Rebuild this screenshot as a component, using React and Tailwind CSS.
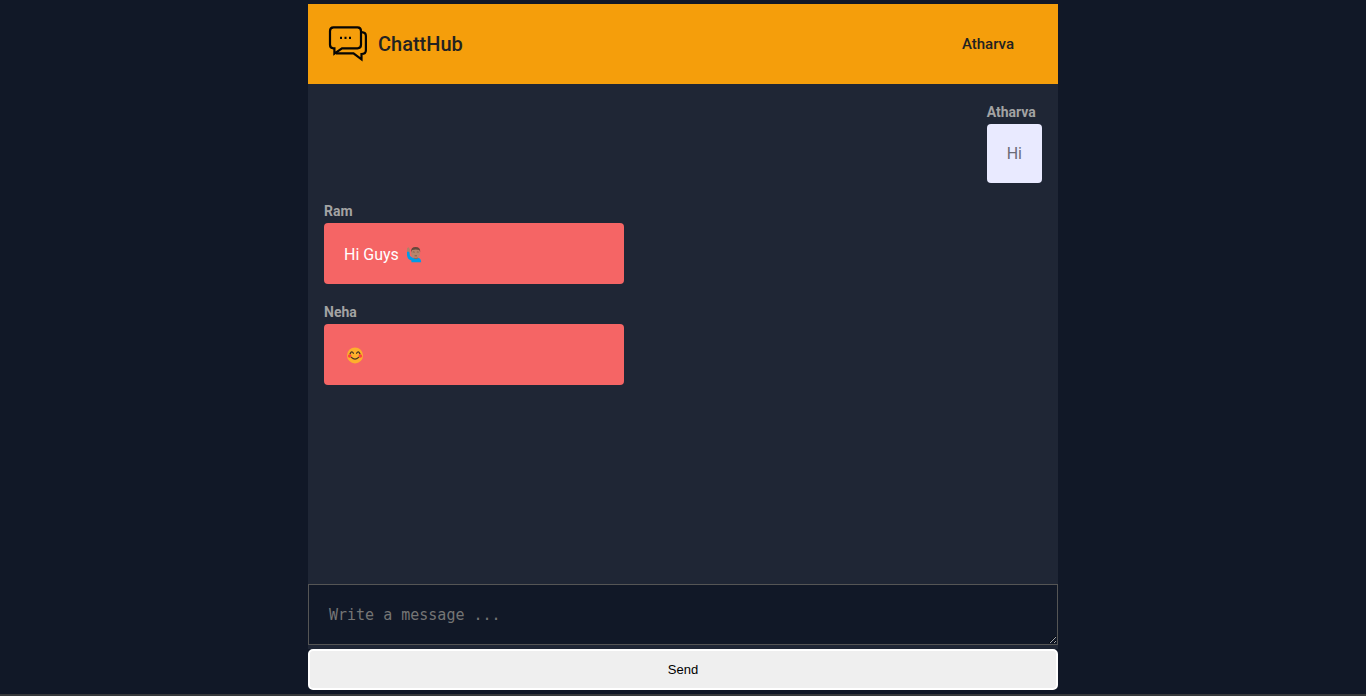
import React from "react";

function Logo() {
  return (
    <svg viewBox="0 0 40 36" className="h-9 w-10" fill="none" stroke="#050505" strokeWidth="2.2" strokeLinejoin="miter" aria-hidden="true">
      <path d="M5.5 1.4H29.5Q33 1.4 33 5V18.8Q33 22.3 29.5 22.3H14L6.4 27.6V22.3H5.5Q2 22.3 2 18.8V5Q2 1.4 5.5 1.4Z" />
      <path d="M33.5 6.2Q37.9 6.4 37.9 10V24.2Q37.9 28 33.5 28V33.4L25.5 27.3H8" />
      <path d="M12 11.9h2M16.5 11.9h2M21 11.9h2" />
    </svg>
  );
}

function RaisedHand() {
  return (
    <svg viewBox="0 0 18 18" className="size-[18px]" role="img" aria-label="Man raising hand">
      <path d="M2 6V3Q2 2 2.6 2L3 1.2 3.8 1.6 4.4 2.6 5 4 4.3 6Z" fill="#b08068" />
      <path d="M2 5.7H4.4L5 10 7.5 11.8H13Q16 12.3 16.2 16.2H6.4V14.6Q2.3 13.5 2 9Z" fill="#039be5" />
      <path d="M9 11h3.8v1.4Q11 13.8 9 12.4Z" fill="#986451" />
      <ellipse cx="10.6" cy="7.1" rx="4.5" ry="5" fill="#b8856c" />
      <path d="M6.2 6.2Q5.6 1.1 10.6 1.1T15.2 6.2L14.2 4.1Q10.8 3 7.2 4.1Z" fill="#66483c" />
      <path d="M7.8 6.2q1-.6 1.9 0M11.8 6.2q1-.6 1.9 0M9.6 9.8h2.4" fill="none" stroke="#704d40" strokeWidth=".7" />
    </svg>
  );
}

function Smile() {
  return (
    <svg viewBox="0 0 18 18" className="size-[18px]" role="img" aria-label="Smiling face">
      <circle cx="9" cy="8.4" r="8" fill="#fdb02c" />
      <circle cx="3.7" cy="9" r="1.8" fill="#ff413d" />
      <circle cx="14.3" cy="9" r="1.8" fill="#ff413d" />
      <path d="M4.2 6.6q1.6-3.3 3.2-.3M10.6 6.3q1.6-3 3.2.3M5.4 10.4q3.6 3.4 7.2 0" fill="none" stroke="#493422" strokeWidth="1.3" strokeLinecap="round" />
    </svg>
  );
}

function Message({ author, own = false, children }) {
  return (
    <article className={own ? "self-end" : "w-[300px] max-w-full"}>
      <h2 className="mb-1 text-sm leading-4 font-bold text-[#a3a3a3]">{author}</h2>
      <div
        className={
          own
            ? "rounded bg-[#e9eaff] p-5 text-base leading-[19px] text-[#6b6b76]"
            : "flex min-h-[61px] items-center gap-1.5 rounded bg-[#f56565] px-5 pt-[21px] pb-[19px] text-base leading-[21px] text-white"
        }
      >
        {children}
      </div>
    </article>
  );
}

export default function App() {
  return (
    <div className="flex min-h-screen flex-col border-b-2 border-[#36383a] bg-[#111827] pt-1 font-[Roboto,sans-serif]">
      <main className="mx-auto mb-1 flex w-full max-w-[750px] flex-1 flex-col bg-[#1f2635]">
        <header className="flex h-20 items-center justify-between bg-[#f59e0b] pr-11 pl-5 text-[#222222]">
          <div className="flex items-center gap-2.5">
            <Logo />
            <h1 className="text-xl font-medium">ChattHub</h1>
          </div>
          <span className="text-[15px] font-medium">Atharva</span>
        </header>
        <section aria-label="Messages" className="flex flex-1 flex-col gap-5 px-4 py-5">
          <Message author="Atharva" own>Hi</Message>
          <Message author="Ram">
            <span>Hi Guys</span>
            <RaisedHand />
          </Message>
          <Message author="Neha">
            <span className="pl-0.5"><Smile /></span>
          </Message>
        </section>
        <form onSubmit={(e) => e.preventDefault()} className="flex flex-col gap-1">
          <textarea
            aria-label="Message"
            placeholder="Write a message ..."
            rows={1}
            className="block w-full resize overflow-hidden border border-[#555555] bg-[#111827] px-5 pt-[21px] pb-[19px] font-['DejaVu_Sans_Mono',monospace] text-[15px] leading-[19px] text-white outline-none placeholder:text-[#757575]"
          />
          <div className="bg-[#111827]">
            <button type="submit" className="block w-full rounded-[5px] border-2 border-white bg-[#efefef] py-2.5 font-['Liberation_Sans',sans-serif] text-[13px] leading-[17px] text-black">
              Send
            </button>
          </div>
        </form>
      </main>
    </div>
  );
}
